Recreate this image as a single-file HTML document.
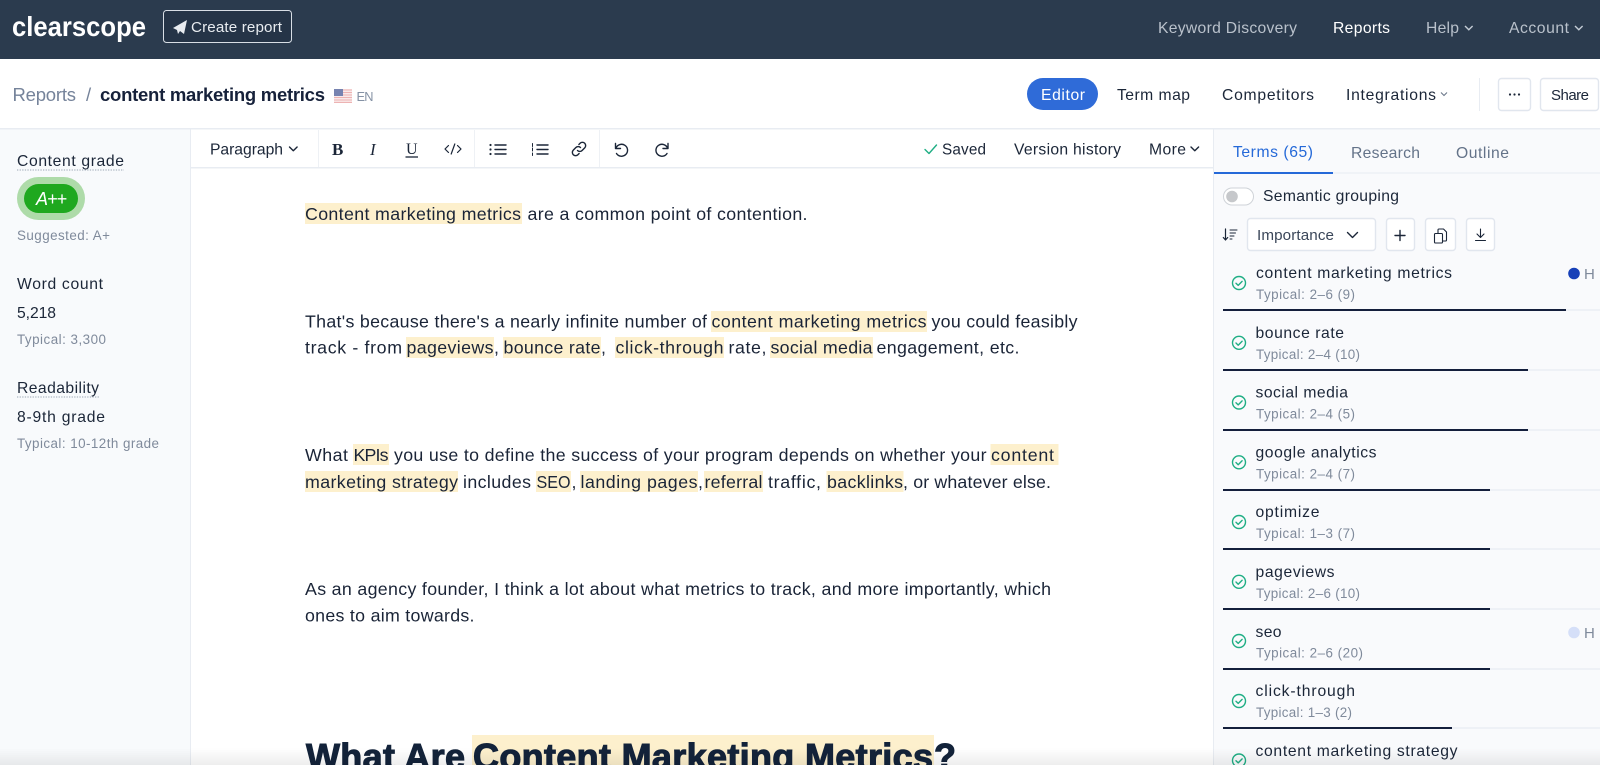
<!DOCTYPE html>
<html lang="en">
<head>
<meta charset="utf-8">
<title>clearscope - content marketing metrics</title>
<style>
html,body{margin:0;padding:0;width:1600px;height:765px;overflow:hidden;background:#fff}
svg{display:block}
text{font-family:"Liberation Sans",sans-serif;fill:#1b2638;font-size:15.7px}
.nav{font-size:15.7px;fill:#b9c1cb}
.b{font-size:17.8px;fill:#1a2437}
.s{font-size:13.4px;fill:#7f8a9b}
.m{font-size:15.7px;fill:#1b2638}
.n{font-size:15.7px;fill:#1b2638}
.h{fill:#fdf0cd}
.ic{fill:none;stroke:#1b2638;stroke-width:1.4;stroke-linecap:round;stroke-linejoin:round}
.ok{fill:none;stroke:#1fae84;stroke-width:1.4;stroke-linecap:round;stroke-linejoin:round}
.box{fill:#fff;stroke:#e1e6ee;stroke-width:1.4}
.dot{stroke:#9aa5b3;stroke-width:1;stroke-dasharray:1.3 1.3}
.hd{font-size:36px;font-weight:700;fill:#13233a;stroke:#13233a;stroke-width:1.1}
.t{fill:#eef1f6}
.d{fill:#141f3c}
</style>
</head>
<body>
<svg xmlns="http://www.w3.org/2000/svg" width="1600" height="765" viewBox="0 0 1600 765">
<defs>
<linearGradient id="fade" x1="0" y1="0" x2="0" y2="1"><stop offset="0" stop-color="#000" stop-opacity="0"/><stop offset="1" stop-color="#000" stop-opacity=".07"/></linearGradient>
</defs>

<!-- panels -->
<rect x="0" y="129" width="190" height="636" fill="#f8fafc"/>
<rect x="1214" y="129" width="386" height="636" fill="#f9fafc"/>
<rect x="190" y="129" width="1" height="636" fill="#e8ecf2"/>
<rect x="1213" y="129" width="1" height="636" fill="#e8ecf2"/>

<!-- top bar -->
<rect x="0" y="0" width="1600" height="59" fill="#2b3b4e"/>
<text x="12" y="36" style="font-size:28px;fill:#fff;font-weight:700" textLength="134" lengthAdjust="spacingAndGlyphs">clearscope</text>
<rect x="163.5" y="10.5" width="128" height="32" rx="3" fill="#253447" stroke="#d8dee5" stroke-width="1"/>
<path d="M173 28l14-8-3 14-4-3-2 3-1-4z" fill="#e8ecf0"/>
<text x="191" y="32" style="font-size:15.2px;fill:#e8ecf0" textLength="91">Create report</text>
<text class="nav" x="1158" y="33" textLength="139">Keyword Discovery</text>
<text class="nav" x="1333" y="33" textLength="57" style="fill:#fff">Reports</text>
<text class="nav" x="1426" y="33" textLength="33">Help</text>
<path d="M1465 26l3.8 3.8 3.8-3.8" fill="none" stroke="#c4ccd5" stroke-width="1.4"/>
<text class="nav" x="1509" y="33" textLength="60">Account</text>
<path d="M1575 26l3.8 3.8 3.8-3.8" fill="none" stroke="#c4ccd5" stroke-width="1.4"/>

<!-- sub nav -->
<rect x="0" y="128" width="1600" height="1.5" fill="#e8ecf2"/>
<text x="12.5" y="101" style="font-size:18.5px;fill:#75839a" textLength="63.5">Reports</text>
<text x="86" y="101" style="font-size:18.5px;fill:#75839a">/</text>
<text x="100" y="101" style="font-size:18.5px;font-weight:700;fill:#16213a" textLength="225">content marketing metrics</text>
<g opacity=".75">
<rect x="334" y="89" width="18" height="14" fill="#f7e3e3"/>
<path d="M334 90h18M334 92.5h18M334 95h18M334 97.5h18M334 100h18M334 102.4h18" stroke="#e89a9a" stroke-width="1.1"/>
<rect x="334" y="89" width="9" height="7" fill="#4a5a96"/>
</g>
<text x="356.5" y="101" style="font-size:12.8px;fill:#8592a5" textLength="17">EN</text>

<rect x="1027" y="78" width="71" height="32" rx="16" fill="#2f6bd8"/>
<text x="1041" y="100" style="font-size:15.7px;fill:#fff" textLength="44">Editor</text>
<text x="1117" y="100" class="n" textLength="73">Term map</text>
<text x="1222" y="100" class="n" textLength="92">Competitors</text>
<text x="1346" y="100" class="n" textLength="90">Integrations</text>
<path d="M1441 92.5l3 3 3-3" fill="none" stroke="#6b7789" stroke-width="1.1"/>
<rect x="1479" y="78" width="1" height="33" fill="#e8ecf2"/>
<rect class="box" x="1498.5" y="78.500" width="32" height="32" rx="3"/>
<circle cx="1510" cy="94.500" r="1.100" fill="#1b2638"/><circle cx="1514.500" cy="94.500" r="1.100" fill="#1b2638"/><circle cx="1519" cy="94.500" r="1.100" fill="#1b2638"/>
<rect class="box" x="1540.5" y="78.500" width="58" height="32" rx="3"/>
<text x="1551" y="100" style="font-size:15px" textLength="38">Share</text>

<!-- left sidebar -->
<text x="17" y="166" class="m" textLength="107">Content grade</text>
<line class="dot" x1="17" y1="170" x2="124" y2="170"/>
<rect x="17" y="177" width="68" height="43" rx="21.5" fill="#aedba9"/>
<rect x="24" y="184" width="54" height="29" rx="14.5" fill="#1fa81f"/>
<text x="36" y="205" style="font-size:18px;font-style:italic;fill:#fff" textLength="31">A++</text>
<text x="17" y="240" class="s" textLength="93">Suggested: A+</text>
<text x="17" y="289" class="m" textLength="86">Word count</text>
<text x="17" y="318" class="m" textLength="39">5,218</text>
<text x="17" y="344" class="s" textLength="89">Typical: 3,300</text>
<text x="17" y="393" class="m" textLength="82">Readability</text>
<line class="dot" x1="17" y1="397" x2="99" y2="397"/>
<text x="17" y="422" class="m" textLength="88">8-9th grade</text>
<text x="17" y="448" class="s" textLength="142">Typical: 10-12th grade</text>

<!-- toolbar -->
<rect x="191" y="130" width="1022" height="37" fill="#fff"/>
<rect x="191" y="167" width="1022" height="1.5" fill="#e8ecf2"/>
<rect x="318" y="130" width="1" height="37" fill="#eef1f5"/>
<rect x="474" y="130" width="1" height="37" fill="#eef1f5"/>
<rect x="599" y="130" width="1" height="37" fill="#eef1f5"/>
<text x="210" y="154.500" class="n" textLength="73">Paragraph</text>
<path d="M289.500 147l3.800 3.800 3.800-3.800" class="ic"/>
<text x="332" y="155" style="font-family:'Liberation Serif',serif;font-weight:700;font-size:17px">B</text>
<text x="370" y="155" style="font-family:'Liberation Serif',serif;font-style:italic;font-size:17px">I</text>
<text x="406" y="154" style="font-family:'Liberation Serif',serif;font-size:16px" textLength="12">U</text>
<line x1="405.500" y1="157" x2="418" y2="157" stroke="#1b2638" stroke-width="1.300"/>
<path d="M448.500 145.500l-3.500 3.500 3.500 3.500M457.500 145.500l3.500 3.500-3.500 3.500M454.800 144l-3.600 10" class="ic" style="stroke-width:1.200"/>
<path d="M495 145h11M495 149.500h11M495 154h11" class="ic"/>
<circle cx="490.500" cy="145" r="1.100" fill="#1b2638"/><circle cx="490.500" cy="149.500" r="1.100" fill="#1b2638"/><circle cx="490.500" cy="154" r="1.100" fill="#1b2638"/>
<path d="M537 145h11M537 149.500h11M537 154h11" class="ic"/>
<path d="M532.500 143.500v3M532.500 148v3M532.500 153v2.500" class="ic" style="stroke-width:1"/>
<path d="M577.500 150.500a3.200 3.200 0 0 0 4.600 0l2.600-2.600a3.200 3.200 0 0 0-4.600-4.600l-1.200 1.200" class="ic"/>
<path d="M580.500 147.500a3.200 3.200 0 0 0-4.600 0l-2.600 2.600a3.200 3.200 0 0 0 4.600 4.600l1.200-1.200" class="ic"/>
<path d="M615.500 143.500v5h5M616 148a6 6 0 1 1 .5 5.500" class="ic"/>
<path d="M668 143.500v5h-5M667.500 148a6 6 0 1 0-.5 5.500" class="ic"/>
<path d="M925 149.500l4 4 7.500-8.500" class="ok"/>
<text x="942" y="154.500" style="font-size:15.3px" textLength="44">Saved</text>
<text x="1014" y="154.500" class="n" textLength="107">Version history</text>
<text x="1149" y="154.500" class="n" textLength="37">More</text>
<path d="M1191 147l3.800 3.800 3.800-3.800" class="ic"/>

<!-- highlights -->
<rect class="h" x="305" y="203" width="217" height="21"/>
<rect class="h" x="711" y="311" width="216" height="21"/>
<rect class="h" x="406" y="337" width="88" height="21"/>
<rect class="h" x="503" y="337" width="98" height="21"/>
<rect class="h" x="615" y="337" width="109" height="21"/>
<rect class="h" x="770" y="337" width="103" height="21"/>
<rect class="h" x="353" y="444" width="36" height="21"/>
<rect class="h" x="990.500" y="444" width="68" height="21"/>
<rect class="h" x="305" y="471" width="153" height="21"/>
<rect class="h" x="536" y="471" width="35" height="21"/>
<rect class="h" x="580" y="471" width="118" height="21"/>
<rect class="h" x="704" y="471" width="59" height="21"/>
<rect class="h" x="826.500" y="471" width="77" height="21"/>
<rect class="h" x="472" y="735" width="462" height="30"/>

<!-- body -->
<text class="b" x="305" y="220" textLength="216">Content marketing metrics</text>
<text class="b" x="527.500" y="220" textLength="280">are a common point of contention.</text>

<text class="b" x="305" y="327.500" textLength="402">That's because there's a nearly infinite number of</text>
<text class="b" x="711.500" y="327.500" textLength="215">content marketing metrics</text>
<text class="b" x="931.500" y="327.500" textLength="146">you could feasibly</text>

<text class="b" x="305" y="353.500" textLength="97">track - from</text>
<text class="b" x="406.500" y="353.500" textLength="87">pageviews</text>
<text class="b" x="494" y="353.500">,</text>
<text class="b" x="503.500" y="353.500" textLength="97">bounce rate</text>
<text class="b" x="601" y="353.500">,</text>
<text class="b" x="615.500" y="353.500" textLength="108">click-through</text>
<text class="b" x="728.500" y="353.500" textLength="38">rate,</text>
<text class="b" x="770.500" y="353.500" textLength="102">social media</text>
<text class="b" x="876.500" y="353.500" textLength="143">engagement, etc.</text>

<text class="b" x="305" y="461" textLength="43">What</text>
<text class="b" x="353.500" y="461" textLength="35">KPIs</text>
<text class="b" x="394" y="461" textLength="592.500">you use to define the success of your program depends on whether your</text>
<text class="b" x="991" y="461" textLength="63">content</text>

<text class="b" x="305" y="488" textLength="153">marketing strategy</text>
<text class="b" x="463" y="488" textLength="68">includes</text>
<text class="b" x="536.500" y="488" textLength="34" lengthAdjust="spacingAndGlyphs">SEO</text>
<text class="b" x="571.500" y="488">,</text>
<text class="b" x="580.500" y="488" textLength="117">landing pages</text>
<text class="b" x="698" y="488">,</text>
<text class="b" x="704.500" y="488" textLength="58">referral</text>
<text class="b" x="768" y="488" textLength="53">traffic,</text>
<text class="b" x="827" y="488" textLength="76">backlinks</text>
<text class="b" x="903" y="488" textLength="148">, or whatever else.</text>

<text class="b" x="305" y="595" textLength="746">As an agency founder, I think a lot about what metrics to track, and more importantly, which</text>
<text class="b" x="305" y="621.500" textLength="169.500">ones to aim towards.</text>

<text class="hd" x="306" y="769" textLength="159">What Are</text>
<text class="hd" x="473" y="769" textLength="460">Content Marketing Metrics</text>
<text class="hd" x="934" y="769">?</text>

<!-- right panel -->
<rect x="1214" y="172.500" width="386" height="1" fill="#e8ecf2"/>
<rect x="1214" y="172" width="119" height="2" fill="#2569d8"/>
<text x="1233" y="157" style="font-size:15.7px;fill:#2569d8" textLength="80">Terms (65)</text>
<text x="1351" y="158" style="font-size:15.7px;fill:#647389" textLength="69">Research</text>
<text x="1456" y="158" style="font-size:15.7px;fill:#647389" textLength="53">Outline</text>

<rect x="1223.500" y="188" width="30" height="17" rx="8.500" fill="#fff" stroke="#cfd3d8"/>
<circle cx="1232" cy="196.500" r="5.800" fill="#c6c8cb"/>
<text x="1263" y="201" class="n" textLength="136">Semantic grouping</text>

<path d="M1225.500 229v11M1223.300 237.500l2.200 2.500 2.200-2.500" class="ic" style="stroke-width:1.200"/>
<path d="M1230 230h7M1230 233h5.500M1230 236h4M1230 239h2" class="ic" style="stroke-width:1"/>
<rect class="box" x="1247.500" y="218.500" width="128" height="32" rx="3"/>
<text x="1257" y="240" style="font-size:15.2px;fill:#3a4659" textLength="77">Importance</text>
<path d="M1347.500 232.500l5 5 5-5" class="ic"/>
<rect class="box" x="1386.500" y="218.500" width="28" height="32" rx="3"/>
<path d="M1400 230.500v10M1395 235.500h10" class="ic"/>
<rect class="box" x="1425.500" y="218.500" width="30" height="32" rx="3"/>
<path d="M1434.500 234.500a1 1 0 0 1 1-1h6a1 1 0 0 1 1 1v7.500a1 1 0 0 1-1 1h-6a1 1 0 0 1-1-1z" class="ic" style="stroke-width:1.100"/>
<path d="M1438 233v-3a1 1 0 0 1 1-1h4.500l3 3v8a1 1 0 0 1-1 1h-3" class="ic" style="stroke-width:1.100"/>
<rect class="box" x="1466.500" y="218.500" width="28" height="32" rx="3"/>
<path d="M1480.500 229v8M1477 234l3.500 3.500 3.500-3.500M1475.500 240.500h10" class="ic" style="stroke-width:1.100"/>

<!-- term rows -->
<g>
<circle class="ok" cx="1239" cy="283" r="6.500"/><path class="ok" d="M1236 283.200l2.200 2.200 3.900-4"/>
<text class="n" x="1256" y="278" textLength="196">content marketing metrics</text>
<text class="s" x="1256" y="299" textLength="99">Typical: 2–6 (9)</text>
<rect class="t" x="1223" y="309" width="377" height="2"/><rect class="d" x="1223" y="309" width="343" height="2"/>
<circle cx="1574" cy="273.500" r="5.800" fill="#1740b8"/><text x="1584" y="279" style="font-size:15px;fill:#7f8a9b">H</text>
</g>
<g>
<circle class="ok" cx="1239" cy="342.800" r="6.500"/><path class="ok" d="M1236 343l2.200 2.200 3.900-4"/>
<text class="n" x="1255.500" y="338" textLength="88.500">bounce rate</text>
<text class="s" x="1256" y="359" textLength="104">Typical: 2–4 (10)</text>
<rect class="t" x="1223" y="369" width="377" height="2"/><rect class="d" x="1223" y="369" width="305" height="2"/>
</g>
<g>
<circle class="ok" cx="1239" cy="402.500" r="6.500"/><path class="ok" d="M1236 402.700l2.200 2.200 3.900-4"/>
<text class="n" x="1255.500" y="397.500" textLength="92.500">social media</text>
<text class="s" x="1256" y="418.500" textLength="99">Typical: 2–4 (5)</text>
<rect class="t" x="1223" y="429" width="377" height="2"/><rect class="d" x="1223" y="429" width="305" height="2"/>
</g>
<g>
<circle class="ok" cx="1239" cy="462.300" r="6.500"/><path class="ok" d="M1236 462.500l2.200 2.200 3.900-4"/>
<text class="n" x="1255.500" y="457.500" textLength="121">google analytics</text>
<text class="s" x="1256" y="478.500" textLength="99">Typical: 2–4 (7)</text>
<rect class="t" x="1223" y="489" width="377" height="2"/><rect class="d" x="1223" y="489" width="267" height="2"/>
</g>
<g>
<circle class="ok" cx="1239" cy="522" r="6.500"/><path class="ok" d="M1236 522.200l2.200 2.200 3.900-4"/>
<text class="n" x="1255.500" y="517" textLength="64">optimize</text>
<text class="s" x="1256" y="538" textLength="99">Typical: 1–3 (7)</text>
<rect class="t" x="1223" y="548" width="377" height="2"/><rect class="d" x="1223" y="548" width="267" height="2"/>
</g>
<g>
<circle class="ok" cx="1239" cy="581.800" r="6.500"/><path class="ok" d="M1236 582l2.200 2.200 3.900-4"/>
<text class="n" x="1255.500" y="577" textLength="79">pageviews</text>
<text class="s" x="1256" y="598" textLength="104">Typical: 2–6 (10)</text>
<rect class="t" x="1223" y="608" width="377" height="2"/><rect class="d" x="1223" y="608" width="267" height="2"/>
</g>
<g>
<circle class="ok" cx="1239" cy="641" r="6.500"/><path class="ok" d="M1236 641.200l2.200 2.200 3.900-4"/>
<text class="n" x="1255.500" y="637" textLength="26">seo</text>
<text class="s" x="1256" y="657.500" textLength="107">Typical: 2–6 (20)</text>
<rect class="t" x="1223" y="668" width="377" height="2"/><rect class="d" x="1223" y="668" width="267" height="2"/>
<circle cx="1574" cy="632.500" r="5.800" fill="#d5dff8"/><text x="1584" y="638" style="font-size:15px;fill:#7f8a9b">H</text>
</g>
<g>
<circle class="ok" cx="1239" cy="701" r="6.500"/><path class="ok" d="M1236 701.200l2.200 2.200 3.900-4"/>
<text class="n" x="1255.500" y="696" textLength="99.500">click-through</text>
<text class="s" x="1256" y="717" textLength="96">Typical: 1–3 (2)</text>
<rect class="t" x="1223" y="727" width="377" height="2"/><rect class="d" x="1223" y="727" width="229" height="2"/>
</g>
<g>
<circle class="ok" cx="1239" cy="760.500" r="6.500"/><path class="ok" d="M1236 760.700l2.200 2.200 3.900-4"/>
<text class="n" x="1255.500" y="756" textLength="202">content marketing strategy</text>
</g>

<!-- bottom fade -->
<rect x="0" y="748" width="1600" height="17" fill="url(#fade)"/>
</svg>
</body>
</html>
